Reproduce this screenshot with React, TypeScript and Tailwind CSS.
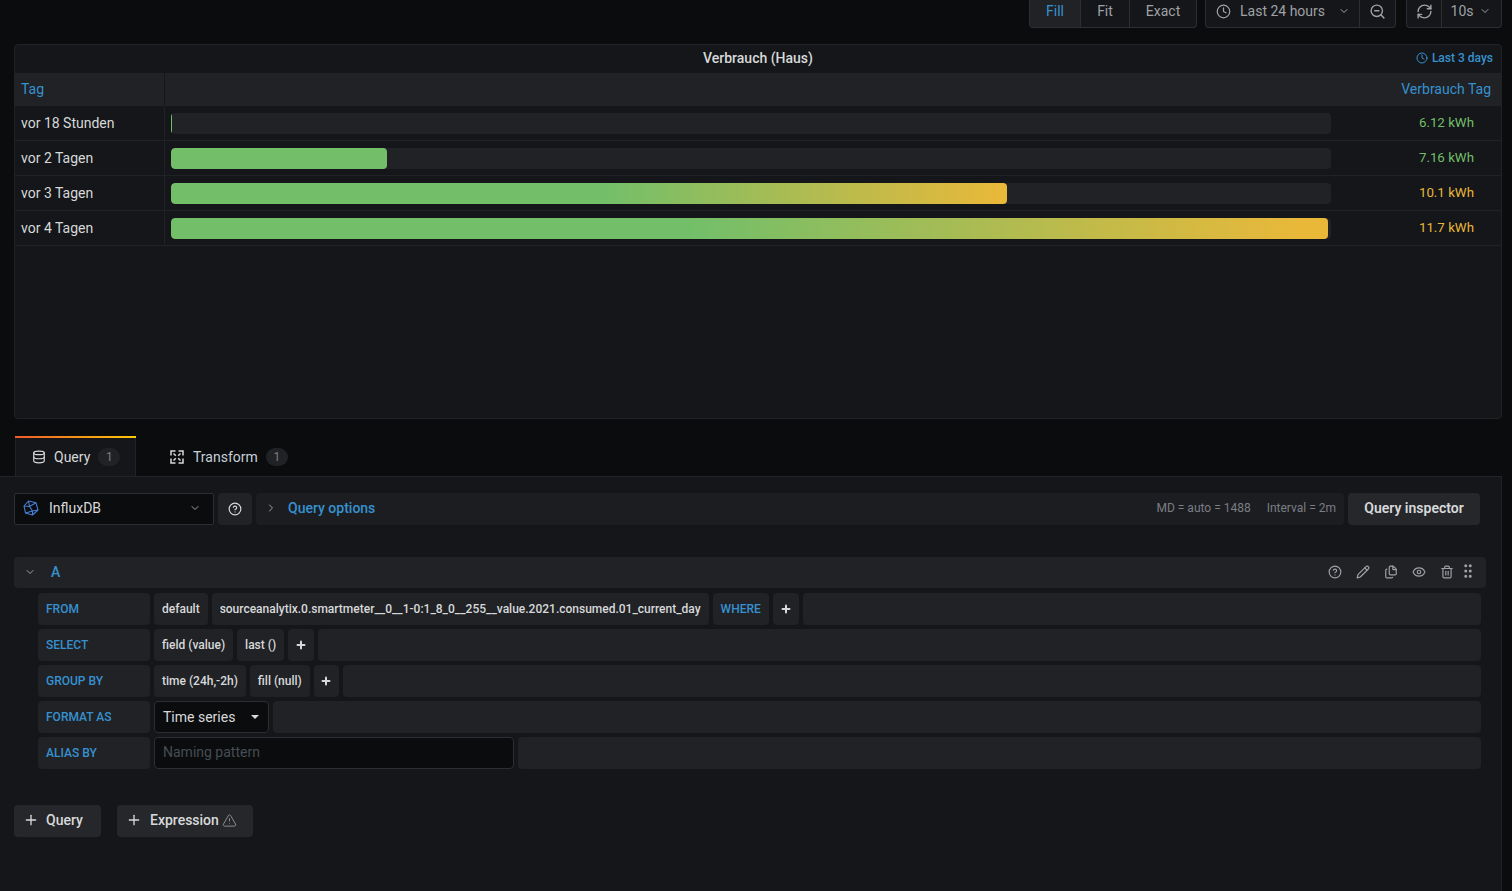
import { ChevronDown, ChevronRight, CircleHelp, Clock, Database, Eye, Files, GripVertical, Pencil, Plus, RefreshCw, Trash2, TriangleAlert, ZoomOut } from "lucide-react"

const rows = [
  { label: "vor 18 Stunden", fill: "w-[1px] bg-[#73bf69]", value: "6.12 kWh", color: "text-[#73bf69]" },
  { label: "vor 2 Tagen", fill: "w-[216px] bg-[#73bf69]", value: "7.16 kWh", color: "text-[#73bf69]" },
  { label: "vor 3 Tagen", fill: "w-[836px] bg-[linear-gradient(90deg,#73bf69_52%,#eab839)]", value: "10.1 kWh", color: "text-[#eab839]" },
  { label: "vor 4 Tagen", fill: "w-[1157px] bg-[linear-gradient(90deg,#73bf69_45%,#eab839_98%)]", value: "11.7 kWh", color: "text-[#eab839]" },
]

function Cell({ children, blue }: { children: React.ReactNode; blue?: boolean }) {
  return (
    <div className={`h-8 px-2 flex items-center rounded-sm bg-[#202226] text-xs font-medium whitespace-nowrap ${blue ? "text-[#3791cf]" : "text-[#d8d9da]"}`}>
      {children}
    </div>
  )
}

function Label({ children }: { children: React.ReactNode }) {
  return <div className="w-[112px] h-8 px-2 flex items-center rounded-sm bg-[#202226] text-xs font-medium text-[#3791cf]">{children}</div>
}

function AddCell({ narrow }: { narrow?: boolean }) {
  return (
    <div className={`h-8 flex items-center justify-center rounded-sm bg-[#202226] text-[#d8d9da] ${narrow ? "w-[25px]" : "w-[26px]"}`}>
      <Plus size={12} strokeWidth={4} />
    </div>
  )
}

function Filler() {
  return <div className="flex-1 h-8 rounded-sm bg-[#202226]" />
}

function InfluxLogo() {
  return (
    <svg width="16" height="16" viewBox="0 0 16 16" fill="none" stroke="#4a7fd6" strokeWidth="1.1" strokeLinejoin="round">
      <path d="M5.5 1 L13 2.8 L15 10 L9.5 15 L2.5 13 L1 6 Z" />
      <path d="M5.5 1 L6.5 6.5 L1 6 M6.5 6.5 L13 2.8 M6.5 6.5 L9.5 11 L15 10 M9.5 11 L9.5 15 M9.5 11 L2.5 13" />
    </svg>
  )
}

function TransformIcon() {
  return (
    <svg width="14" height="14" viewBox="0 0 14 14" fill="none" stroke="#d8d9da" strokeWidth="1.5">
      <path d="M1 5.5V1H5.5M8.5 1H13V5.5M13 8.5V13H8.5M5.5 13H1V8.5" />
      <path d="M3.5 3.5L5.8 5.8M10.5 3.5L8.2 5.8M10.5 10.5L8.2 8.2M3.5 10.5L5.8 8.2" />
    </svg>
  )
}

export default function App() {
  return (
    <div className="w-[1512px] h-[891px] overflow-hidden bg-[#0b0c0e] text-[#d8d9da] text-sm font-['Roboto',sans-serif] flex flex-col">
      <div className="h-[28px] shrink-0 flex justify-end items-stretch gap-2 pr-[10px] text-[#9fa1a6]">
        <div className="w-[168px] flex rounded-b-sm border border-t-0 border-[#2c2e33] bg-[#141619]">
          <div className="w-[50px] pb-[5px] flex items-center justify-center bg-[#202226] text-[#3791cf]">Fill</div>
          <div className="w-[49px] pb-[5px] flex items-center justify-center border-l border-[#2c2e33]">Fit</div>
          <div className="flex-1 pb-[5px] flex items-center justify-center border-l border-[#2c2e33]">Exact</div>
        </div>
        <div className="w-[191px] flex rounded-b-sm border border-t-0 border-[#2c2e33] bg-[#141619]">
          <div className="flex-1 pb-[5px] flex items-center pl-[10px] gap-[9px]">
            <Clock size={15} />
            <span>Last 24 hours</span>
            <ChevronDown size={12} className="ml-[4px]" />
          </div>
          <div className="w-[36px] pb-[5px] flex items-center justify-center border-l border-[#2c2e33]">
            <ZoomOut size={17} />
          </div>
        </div>
        <div className="w-[96px] ml-[2px] flex rounded-b-sm border border-t-0 border-[#2c2e33] bg-[#141619]">
          <div className="w-[35px] pb-[5px] flex items-center justify-center border-r border-[#2c2e33]">
            <RefreshCw size={17} />
          </div>
          <div className="flex-1 pb-[5px] flex items-center justify-center gap-[6px] pr-[1px]">
            <span>10s</span>
            <ChevronDown size={12} />
          </div>
        </div>
      </div>

      <div className="mt-4 ml-[14px] mr-[10px] h-[375px] shrink-0 rounded-sm border border-[#202226] bg-[#141619]">
        <div className="relative h-[28px] pb-[2px] flex items-center justify-center text-sm font-medium text-[#d8d9da]">
          Verbrauch (Haus)
          <div className="absolute right-2 top-0 h-full pb-[2px] flex items-center gap-1 text-xs text-[#3791cf]">
            <Clock size={12} />
            Last 3 days
          </div>
        </div>
        <div className="h-[33px] flex items-center bg-[#202226] text-[#3791cf]">
          <div className="w-[150px] h-full pb-[2px] flex items-center pl-[6px] border-r border-[#141619]">Tag</div>
          <div className="flex-1 pb-[2px] text-right pr-[10px]">Verbrauch Tag</div>
        </div>
        {rows.map((row) => (
          <div key={row.label} className="h-[35px] flex items-center border-b border-[#202226]">
            <div className="w-[150px] h-full flex items-center pl-[6px] border-r border-[#202226]">{row.label}</div>
            <div className="ml-[6px] w-[1160px] h-[21px] rounded-sm bg-[#202226] overflow-hidden">
              <div className={`h-full rounded-sm ${row.fill}`} />
            </div>
            <div className={`flex-1 pr-[27px] text-right text-[13.3px] ${row.color}`}>{row.value}</div>
          </div>
        ))}
      </div>

      <div className="mt-[17px] w-[1502px] h-[40px] shrink-0 flex pl-[15px] items-stretch">
        <div className="relative w-[121px] pt-[2px] flex items-center pl-[16px] gap-2 bg-[#141619] border-x border-[#202226]">
          <div className="absolute left-[-1px] right-[-1px] top-0 h-[2px] bg-[linear-gradient(90deg,#f05a28,#fbca0a)]" />
          <Database size={14} />
          <span>Query</span>
          <span className="w-[22px] h-[18px] flex items-center justify-center rounded-full bg-[#202226] text-xs text-[#7b7e85]">1</span>
        </div>
        <div className="pt-[2px] flex items-center pl-[34px] gap-2 text-[#c7d0d9]">
          <TransformIcon />
          <span className="ml-[1px]">Transform</span>
          <span className="w-[22px] h-[18px] flex items-center justify-center rounded-full bg-[#202226] text-xs text-[#7b7e85]">1</span>
        </div>
      </div>

      <div className="flex-1 w-[1502px] bg-[#141619] border-t border-r border-[#202226] pl-[14px] pt-4">
        <div className="h-[32px] w-[1466px] flex gap-1">
          <div className="w-[200px] h-full pb-[2px] flex items-center pl-2 pr-3 gap-[10px] rounded-[2px] border border-[#2c2e33] bg-[#0b0c0e]">
            <InfluxLogo />
            <span>InfluxDB</span>
            <ChevronDown size={12} className="ml-auto text-[#9fa1a6]" />
          </div>
          <div className="w-[34px] h-full flex items-center justify-center rounded-sm bg-[#202226]">
            <CircleHelp size={14} />
          </div>
          <div className="flex-1 h-full pb-[2px] flex items-center rounded-sm bg-[#1b1d21] pl-[9px] pr-2">
            <ChevronRight size={12} className="text-[#9fa1a6]" />
            <span className="ml-[11px] font-medium text-[#3791cf]">Query options</span>
            <span className="ml-auto text-xs text-[#7b7e85]">MD = auto = 1488</span>
            <span className="ml-4 text-xs text-[#7b7e85]">Interval = 2m</span>
          </div>
          <div className="w-[132px] h-full pb-[2px] flex items-center justify-center rounded-sm bg-[#25272b] font-semibold text-[#d8d9da]">Query inspector</div>
        </div>

        <div className="mt-[32px] w-[1472px] h-[31px] pb-[1px] flex items-center rounded-sm bg-[#202226] pl-[10px] pr-[9px] text-[#9fa1a6]">
          <ChevronDown size={12} />
          <span className="ml-[15px] font-medium text-[#3791cf]">A</span>
          <div className="ml-auto flex items-center gap-[14px]">
            <CircleHelp size={14} />
            <Pencil size={14} />
            <Files size={14} />
            <Eye size={14} />
            <Trash2 size={14} />
            <GripVertical size={18} className="-ml-[9px] -mt-[2px]" />
          </div>
        </div>

        <div className="mt-[5px] ml-6 w-[1443px] flex flex-col gap-1">
          <div className="flex gap-1">
            <Label>FROM</Label>
            <Cell>default</Cell>
            <Cell>sourceanalytix.0.smartmeter__0__1-0:1_8_0__255__value.2021.consumed.01_current_day</Cell>
            <Cell blue>WHERE</Cell>
            <AddCell />
            <Filler />
          </div>
          <div className="flex gap-1">
            <Label>SELECT</Label>
            <Cell>field (value)</Cell>
            <Cell>last ()</Cell>
            <AddCell />
            <Filler />
          </div>
          <div className="flex gap-1">
            <Label>GROUP BY</Label>
            <Cell>time (24h,-2h)</Cell>
            <Cell>fill (null)</Cell>
            <AddCell narrow />
            <Filler />
          </div>
          <div className="flex gap-1">
            <Label>FORMAT AS</Label>
            <div className="w-[115px] h-8 flex items-center pl-2 pr-[9px] rounded-sm border border-[#2c2e33] bg-[#0b0c0e]">
              Time series
              <span className="ml-auto w-0 h-0 border-x-[4px] border-t-[4px] border-x-transparent border-t-[#d8d9da]" />
            </div>
            <Filler />
          </div>
          <div className="flex gap-1">
            <Label>ALIAS BY</Label>
            <div className="w-[360px] h-8 pb-[2px] flex items-center pl-2 rounded-sm border border-[#2c2e33] bg-[#0b0c0e] text-[#464c54]">Naming pattern</div>
            <Filler />
          </div>
        </div>

        <div className="mt-9 flex gap-4">
          <div className="w-[87px] h-8 pb-[2px] flex items-center pl-[9px] gap-[7px] rounded-sm bg-[#25272b] font-medium">
            <Plus size={16} />
            Query
          </div>
          <div className="w-[136px] h-8 pb-[2px] flex items-center pl-[9px] rounded-sm bg-[#25272b] font-medium">
            <Plus size={16} />
            <span className="ml-2">Expression</span>
            <TriangleAlert size={15} className="ml-[3px] text-[#9fa1a6]" strokeWidth={1.3} />
          </div>
        </div>
      </div>
    </div>
  )
}
